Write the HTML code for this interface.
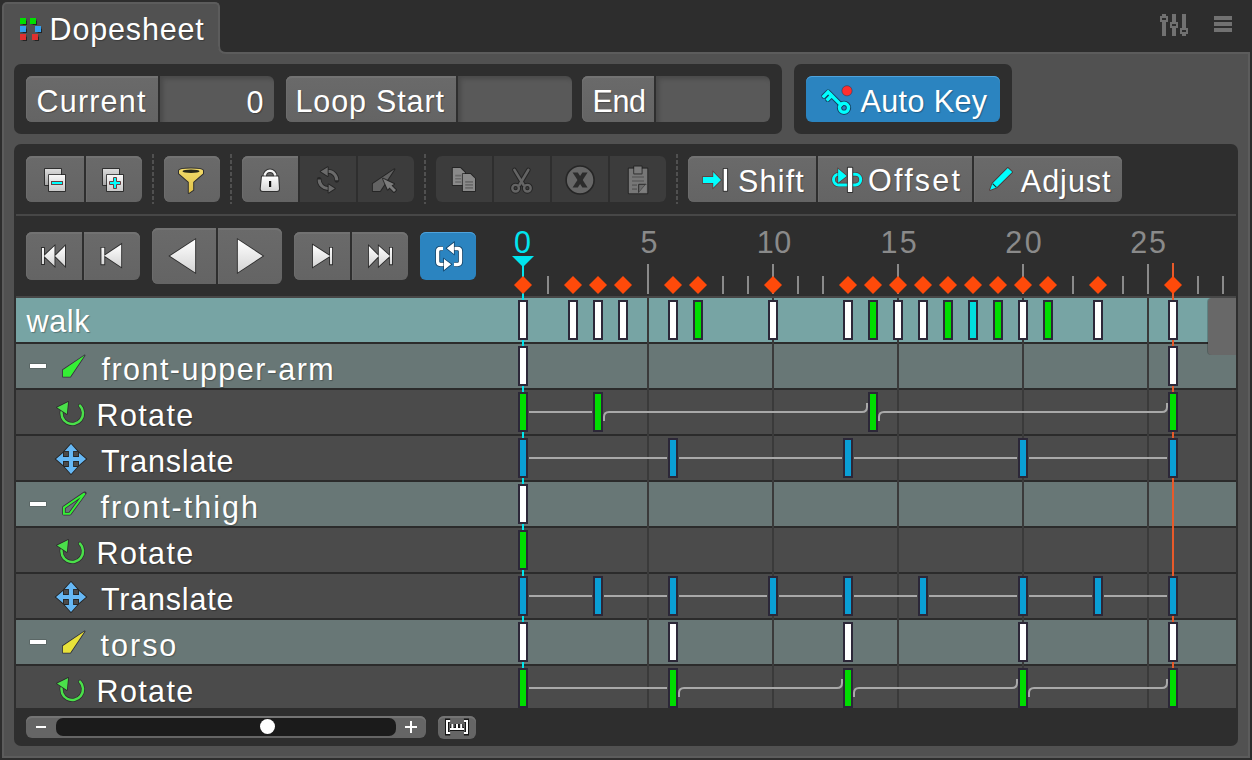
<!DOCTYPE html><html><head><meta charset="utf-8"><style>
*{margin:0;padding:0;box-sizing:border-box}
html,body{width:1252px;height:760px;overflow:hidden;background:#2d2d2d;font-family:"Liberation Sans",sans-serif;color:#fff}
.abs{position:absolute}
.t{position:absolute;white-space:nowrap;font-size:30.5px;line-height:1;color:#fff;text-shadow:1px 1px 1px rgba(0,0,0,.28)}
.dark{position:absolute;background:#2e2e2e;border-radius:7px}
.btn{position:absolute;background:linear-gradient(#6a6a6a,#646464);box-shadow:inset 0 2px 0 #727272,inset 1px 0 0 #6c6c6c}
.ina{position:absolute;background:#3c3c3c}
.fld{position:absolute;background:#595959;box-shadow:inset 3px 3px 4px rgba(0,0,0,.18)}
.sep{position:absolute;width:2px;background:repeating-linear-gradient(#505050 0 4px,transparent 4px 6px)}
</style></head><body>
<div class="abs" style="left:2px;top:52px;width:1248px;height:706px;background:#515151;border:2px solid #5c5c5c"></div>
<div class="abs" style="left:2px;top:2px;width:218px;height:54px;background:#515151;border:2px solid #5c5c5c;border-bottom:none;border-radius:5px 5px 0 0"></div>
<svg class="abs" style="left:210px;top:36px" width="30" height="24" viewBox="210 36 30 24"><rect x="210" y="36" width="30" height="24" fill="#515151"/><path d="M218 36 H240 V52 H225 Q218 52 218 45Z" fill="#2d2d2d"/><path d="M219 36 V46 Q219 53 226 53 H240" fill="none" stroke="#5c5c5c" stroke-width="2"/><rect x="210" y="56" width="30" height="4" fill="#515151"/></svg>
<div class="abs" style="left:20px;top:18px;width:6px;height:6px;background:#00e000;box-shadow:0.5px 0.5px 1px rgba(0,0,0,.55)"></div>
<div class="abs" style="left:30px;top:18px;width:6px;height:6px;background:#00e000;box-shadow:0.5px 0.5px 1px rgba(0,0,0,.55)"></div>
<div class="abs" style="left:20px;top:26px;width:6px;height:6px;background:#33a0f0;box-shadow:0.5px 0.5px 1px rgba(0,0,0,.55)"></div>
<div class="abs" style="left:35px;top:26px;width:6px;height:6px;background:#33a0f0;box-shadow:0.5px 0.5px 1px rgba(0,0,0,.55)"></div>
<div class="abs" style="left:20px;top:34px;width:6px;height:6px;background:#e03030;box-shadow:0.5px 0.5px 1px rgba(0,0,0,.55)"></div>
<div class="abs" style="left:32px;top:34px;width:6px;height:6px;background:#e03030;box-shadow:0.5px 0.5px 1px rgba(0,0,0,.55)"></div>
<svg class="abs" style="left:1150px;top:5px" width="100" height="40" viewBox="0 0 100 40" fill="#717171"><rect x="12" y="9" width="4" height="22"/><rect x="10" y="11" width="8" height="6"/><rect x="12" y="13" width="4" height="2" fill="#2d2d2d"/><rect x="22" y="9" width="4" height="22"/><rect x="20" y="17" width="8" height="6"/><rect x="22" y="19" width="4" height="2" fill="#2d2d2d"/><rect x="32" y="9" width="4" height="22"/><rect x="30" y="23" width="8" height="6"/><rect x="32" y="25" width="4" height="2" fill="#2d2d2d"/><rect x="64" y="11" width="18" height="4"/><rect x="64" y="17" width="18" height="4"/><rect x="64" y="23" width="18" height="4"/></svg>
<div class="dark" style="left:14px;top:64px;width:768px;height:70px"></div>
<div class="dark" style="left:794px;top:64px;width:218px;height:70px"></div>
<div class="btn" style="left:26px;top:76px;width:132px;height:46px;border-radius:6px 0 0 6px"></div>
<div class="fld" style="left:160px;top:76px;width:114px;height:46px;border-radius:0 6px 6px 0"></div>
<div class="btn" style="left:286px;top:76px;width:170px;height:46px;border-radius:6px 0 0 6px"></div>
<div class="fld" style="left:458px;top:76px;width:114px;height:46px;border-radius:0 6px 6px 0"></div>
<div class="btn" style="left:582px;top:76px;width:72px;height:46px;border-radius:6px 0 0 6px"></div>
<div class="fld" style="left:656px;top:76px;width:114px;height:46px;border-radius:0 6px 6px 0"></div>
<div class="abs" style="left:806px;top:76px;width:194px;height:46px;border-radius:6px;background:#2b84c0;box-shadow:inset 0 1px 0 #4fa3dc"></div>
<div class="dark" style="left:14px;top:144px;width:1224px;height:602px"></div>
<div class="btn" style="left:26px;top:156px;width:58px;height:46px;border-radius:6px 0 0 6px"></div>
<div class="btn" style="left:86px;top:156px;width:56px;height:46px;border-radius:0 6px 6px 0"></div>
<div class="sep" style="left:152px;top:154px;height:50px"></div>
<div class="btn" style="left:164px;top:156px;width:56px;height:46px;border-radius:6px"></div>
<div class="sep" style="left:230px;top:154px;height:50px"></div>
<div class="btn" style="left:242px;top:156px;width:56px;height:46px;border-radius:6px 0 0 6px"></div>
<div class="ina" style="left:300px;top:156px;width:56px;height:46px;border-radius:0"></div>
<div class="ina" style="left:358px;top:156px;width:56px;height:46px;border-radius:0 6px 6px 0"></div>
<div class="sep" style="left:424px;top:154px;height:50px"></div>
<div class="ina" style="left:436px;top:156px;width:56px;height:46px;border-radius:6px 0 0 6px"></div>
<div class="ina" style="left:494px;top:156px;width:56px;height:46px;border-radius:0"></div>
<div class="ina" style="left:552px;top:156px;width:56px;height:46px;border-radius:0"></div>
<div class="ina" style="left:610px;top:156px;width:56px;height:46px;border-radius:0 6px 6px 0"></div>
<div class="sep" style="left:676px;top:154px;height:50px"></div>
<div class="btn" style="left:688px;top:156px;width:128px;height:46px;border-radius:6px 0 0 6px"></div>
<div class="btn" style="left:818px;top:156px;width:154px;height:46px;border-radius:0"></div>
<div class="btn" style="left:974px;top:156px;width:148px;height:46px;border-radius:0 6px 6px 0"></div>
<div class="abs" style="left:16px;top:214px;width:1220px;height:2px;background:#474747"></div>
<div class="btn" style="left:26px;top:232px;width:56px;height:48px;border-radius:6px 0 0 6px"></div>
<div class="btn" style="left:84px;top:232px;width:56px;height:48px;border-radius:0 6px 6px 0"></div>
<div class="btn" style="left:152px;top:228px;width:64px;height:56px;border-radius:6px 0 0 6px"></div>
<div class="btn" style="left:218px;top:228px;width:64px;height:56px;border-radius:0 6px 6px 0"></div>
<div class="btn" style="left:294px;top:232px;width:56px;height:48px;border-radius:6px 0 0 6px"></div>
<div class="btn" style="left:352px;top:232px;width:56px;height:48px;border-radius:0 6px 6px 0"></div>
<div class="abs" style="left:420px;top:232px;width:56px;height:48px;border-radius:6px;background:#2b84c0;box-shadow:inset 0 1px 0 #4fa3dc"></div>
<div class="abs" style="left:16px;top:296px;width:1220px;height:2px;background:#474747"></div>
<div class="abs" style="left:16px;top:298px;width:1220px;height:410px;background:#2b2b2b"></div>
<div class="abs" style="left:16px;top:298px;width:1220px;height:44px;background:#77a4a4"></div>
<div class="abs" style="left:16px;top:344px;width:1220px;height:44px;background:#687776"></div>
<div class="abs" style="left:16px;top:390px;width:1220px;height:44px;background:#4b4b4b"></div>
<div class="abs" style="left:16px;top:436px;width:1220px;height:44px;background:#4b4b4b"></div>
<div class="abs" style="left:16px;top:482px;width:1220px;height:44px;background:#687776"></div>
<div class="abs" style="left:16px;top:528px;width:1220px;height:44px;background:#4b4b4b"></div>
<div class="abs" style="left:16px;top:574px;width:1220px;height:44px;background:#4b4b4b"></div>
<div class="abs" style="left:16px;top:620px;width:1220px;height:44px;background:#687776"></div>
<div class="abs" style="left:16px;top:666px;width:1220px;height:42px;background:#4b4b4b"></div>
<svg class="abs" style="left:0;top:0" width="1252" height="760" viewBox="0 0 1252 760"><rect x="647" y="298" width="2" height="410" fill="#3a3a3a"/><rect x="772" y="298" width="2" height="410" fill="#3a3a3a"/><rect x="897" y="298" width="2" height="410" fill="#3a3a3a"/><rect x="1022" y="298" width="2" height="410" fill="#3a3a3a"/><rect x="1147" y="298" width="2" height="410" fill="#3a3a3a"/><rect x="547" y="276" width="2" height="18" fill="#8a8a8a"/><rect x="647" y="264" width="2" height="30" fill="#8a8a8a"/><rect x="722" y="276" width="2" height="18" fill="#8a8a8a"/><rect x="747" y="276" width="2" height="18" fill="#8a8a8a"/><rect x="772" y="264" width="2" height="30" fill="#8a8a8a"/><rect x="797" y="276" width="2" height="18" fill="#8a8a8a"/><rect x="822" y="276" width="2" height="18" fill="#8a8a8a"/><rect x="897" y="264" width="2" height="30" fill="#8a8a8a"/><rect x="1022" y="264" width="2" height="30" fill="#8a8a8a"/><rect x="1072" y="276" width="2" height="18" fill="#8a8a8a"/><rect x="1122" y="276" width="2" height="18" fill="#8a8a8a"/><rect x="1147" y="264" width="2" height="30" fill="#8a8a8a"/><rect x="1197" y="276" width="2" height="18" fill="#8a8a8a"/><rect x="1222" y="276" width="2" height="18" fill="#8a8a8a"/><g font-family="Liberation Sans" font-size="30.5" fill="#8a8a8a"><text x="640.5" y="253">5</text><text x="756.7" y="253">1</text><text x="774.2" y="253">0</text><text x="880.4" y="253">1</text><text x="899.8" y="253">5</text><text x="1005.2" y="253">2</text><text x="1024.8" y="253">0</text><text x="1130.2" y="253">2</text><text x="1149.1" y="253">5</text></g><text x="513.9" y="253" font-family="Liberation Sans" font-size="30.5" fill="#00e5ee">0</text><rect x="1172" y="263" width="2" height="445" fill="#e85a2a"/><rect x="522" y="262" width="2" height="446" fill="#00e5ee"/><path d="M512 256 H534 L523 267 Z" fill="#00e5ee"/><path d="M523 276 L532 285 L523 294 L514 285 Z" fill="#ff4a0a"/><path d="M573 276 L582 285 L573 294 L564 285 Z" fill="#ff4a0a"/><path d="M598 276 L607 285 L598 294 L589 285 Z" fill="#ff4a0a"/><path d="M623 276 L632 285 L623 294 L614 285 Z" fill="#ff4a0a"/><path d="M673 276 L682 285 L673 294 L664 285 Z" fill="#ff4a0a"/><path d="M698 276 L707 285 L698 294 L689 285 Z" fill="#ff4a0a"/><path d="M773 276 L782 285 L773 294 L764 285 Z" fill="#ff4a0a"/><path d="M848 276 L857 285 L848 294 L839 285 Z" fill="#ff4a0a"/><path d="M873 276 L882 285 L873 294 L864 285 Z" fill="#ff4a0a"/><path d="M898 276 L907 285 L898 294 L889 285 Z" fill="#ff4a0a"/><path d="M923 276 L932 285 L923 294 L914 285 Z" fill="#ff4a0a"/><path d="M948 276 L957 285 L948 294 L939 285 Z" fill="#ff4a0a"/><path d="M973 276 L982 285 L973 294 L964 285 Z" fill="#ff4a0a"/><path d="M998 276 L1007 285 L998 294 L989 285 Z" fill="#ff4a0a"/><path d="M1023 276 L1032 285 L1023 294 L1014 285 Z" fill="#ff4a0a"/><path d="M1048 276 L1057 285 L1048 294 L1039 285 Z" fill="#ff4a0a"/><path d="M1098 276 L1107 285 L1098 294 L1089 285 Z" fill="#ff4a0a"/><path d="M1173 276 L1182 285 L1173 294 L1164 285 Z" fill="#ff4a0a"/><path d="M529 412 H592" stroke="#a9a9a9" stroke-width="2" fill="none"/><path d="M604 421 V417 Q604 412 609 412 H862 Q867 412 867 407 V403" stroke="#a9a9a9" stroke-width="2" fill="none"/><path d="M879 421 V417 Q879 412 884 412 H1162 Q1167 412 1167 407 V403" stroke="#a9a9a9" stroke-width="2" fill="none"/><path d="M529 458 H667" stroke="#a9a9a9" stroke-width="2" fill="none"/><path d="M679 458 H842" stroke="#a9a9a9" stroke-width="2" fill="none"/><path d="M854 458 H1017" stroke="#a9a9a9" stroke-width="2" fill="none"/><path d="M1029 458 H1167" stroke="#a9a9a9" stroke-width="2" fill="none"/><path d="M529 596 H592" stroke="#a9a9a9" stroke-width="2" fill="none"/><path d="M604 596 H667" stroke="#a9a9a9" stroke-width="2" fill="none"/><path d="M679 596 H767" stroke="#a9a9a9" stroke-width="2" fill="none"/><path d="M779 596 H842" stroke="#a9a9a9" stroke-width="2" fill="none"/><path d="M854 596 H917" stroke="#a9a9a9" stroke-width="2" fill="none"/><path d="M929 596 H1017" stroke="#a9a9a9" stroke-width="2" fill="none"/><path d="M1029 596 H1092" stroke="#a9a9a9" stroke-width="2" fill="none"/><path d="M1104 596 H1167" stroke="#a9a9a9" stroke-width="2" fill="none"/><path d="M529 688 H667" stroke="#a9a9a9" stroke-width="2" fill="none"/><path d="M679 697 V693 Q679 688 684 688 H837 Q842 688 842 683 V679" stroke="#a9a9a9" stroke-width="2" fill="none"/><path d="M854 697 V693 Q854 688 859 688 H1012 Q1017 688 1017 683 V679" stroke="#a9a9a9" stroke-width="2" fill="none"/><path d="M1029 697 V693 Q1029 688 1034 688 H1162 Q1167 688 1167 683 V679" stroke="#a9a9a9" stroke-width="2" fill="none"/><rect x="519" y="301" width="8" height="38" fill="#ffffff" stroke="#2c2738" stroke-width="2"/><rect x="569" y="301" width="8" height="38" fill="#ffffff" stroke="#2c2738" stroke-width="2"/><rect x="594" y="301" width="8" height="38" fill="#ffffff" stroke="#2c2738" stroke-width="2"/><rect x="619" y="301" width="8" height="38" fill="#ffffff" stroke="#2c2738" stroke-width="2"/><rect x="669" y="301" width="8" height="38" fill="#ffffff" stroke="#2c2738" stroke-width="2"/><rect x="694" y="301" width="8" height="38" fill="#00dd00" stroke="#2c2738" stroke-width="2"/><rect x="769" y="301" width="8" height="38" fill="#ffffff" stroke="#2c2738" stroke-width="2"/><rect x="844" y="301" width="8" height="38" fill="#ffffff" stroke="#2c2738" stroke-width="2"/><rect x="869" y="301" width="8" height="38" fill="#00dd00" stroke="#2c2738" stroke-width="2"/><rect x="894" y="301" width="8" height="38" fill="#ffffff" stroke="#2c2738" stroke-width="2"/><rect x="919" y="301" width="8" height="38" fill="#ffffff" stroke="#2c2738" stroke-width="2"/><rect x="944" y="301" width="8" height="38" fill="#00dd00" stroke="#2c2738" stroke-width="2"/><rect x="969" y="301" width="8" height="38" fill="#00dede" stroke="#2c2738" stroke-width="2"/><rect x="994" y="301" width="8" height="38" fill="#00dd00" stroke="#2c2738" stroke-width="2"/><rect x="1019" y="301" width="8" height="38" fill="#ffffff" stroke="#2c2738" stroke-width="2"/><rect x="1044" y="301" width="8" height="38" fill="#00dd00" stroke="#2c2738" stroke-width="2"/><rect x="1094" y="301" width="8" height="38" fill="#ffffff" stroke="#2c2738" stroke-width="2"/><rect x="1169" y="301" width="8" height="38" fill="#ffffff" stroke="#2c2738" stroke-width="2"/><rect x="519" y="347" width="8" height="38" fill="#ffffff" stroke="#2c2738" stroke-width="2"/><rect x="1169" y="347" width="8" height="38" fill="#ffffff" stroke="#2c2738" stroke-width="2"/><rect x="519" y="393" width="8" height="38" fill="#00dd00" stroke="#2c2738" stroke-width="2"/><rect x="594" y="393" width="8" height="38" fill="#00dd00" stroke="#2c2738" stroke-width="2"/><rect x="869" y="393" width="8" height="38" fill="#00dd00" stroke="#2c2738" stroke-width="2"/><rect x="1169" y="393" width="8" height="38" fill="#00dd00" stroke="#2c2738" stroke-width="2"/><rect x="519" y="439" width="8" height="38" fill="#0a9fd6" stroke="#2c2738" stroke-width="2"/><rect x="669" y="439" width="8" height="38" fill="#0a9fd6" stroke="#2c2738" stroke-width="2"/><rect x="844" y="439" width="8" height="38" fill="#0a9fd6" stroke="#2c2738" stroke-width="2"/><rect x="1019" y="439" width="8" height="38" fill="#0a9fd6" stroke="#2c2738" stroke-width="2"/><rect x="1169" y="439" width="8" height="38" fill="#0a9fd6" stroke="#2c2738" stroke-width="2"/><rect x="519" y="485" width="8" height="38" fill="#ffffff" stroke="#2c2738" stroke-width="2"/><rect x="519" y="531" width="8" height="38" fill="#00dd00" stroke="#2c2738" stroke-width="2"/><rect x="519" y="577" width="8" height="38" fill="#0a9fd6" stroke="#2c2738" stroke-width="2"/><rect x="594" y="577" width="8" height="38" fill="#0a9fd6" stroke="#2c2738" stroke-width="2"/><rect x="669" y="577" width="8" height="38" fill="#0a9fd6" stroke="#2c2738" stroke-width="2"/><rect x="769" y="577" width="8" height="38" fill="#0a9fd6" stroke="#2c2738" stroke-width="2"/><rect x="844" y="577" width="8" height="38" fill="#0a9fd6" stroke="#2c2738" stroke-width="2"/><rect x="919" y="577" width="8" height="38" fill="#0a9fd6" stroke="#2c2738" stroke-width="2"/><rect x="1019" y="577" width="8" height="38" fill="#0a9fd6" stroke="#2c2738" stroke-width="2"/><rect x="1094" y="577" width="8" height="38" fill="#0a9fd6" stroke="#2c2738" stroke-width="2"/><rect x="1169" y="577" width="8" height="38" fill="#0a9fd6" stroke="#2c2738" stroke-width="2"/><rect x="519" y="623" width="8" height="38" fill="#ffffff" stroke="#2c2738" stroke-width="2"/><rect x="669" y="623" width="8" height="38" fill="#ffffff" stroke="#2c2738" stroke-width="2"/><rect x="844" y="623" width="8" height="38" fill="#ffffff" stroke="#2c2738" stroke-width="2"/><rect x="1019" y="623" width="8" height="38" fill="#ffffff" stroke="#2c2738" stroke-width="2"/><rect x="1169" y="623" width="8" height="38" fill="#ffffff" stroke="#2c2738" stroke-width="2"/><rect x="519" y="669" width="8" height="38" fill="#00dd00" stroke="#2c2738" stroke-width="2"/><rect x="669" y="669" width="8" height="38" fill="#00dd00" stroke="#2c2738" stroke-width="2"/><rect x="844" y="669" width="8" height="38" fill="#00dd00" stroke="#2c2738" stroke-width="2"/><rect x="1019" y="669" width="8" height="38" fill="#00dd00" stroke="#2c2738" stroke-width="2"/><rect x="1169" y="669" width="8" height="38" fill="#00dd00" stroke="#2c2738" stroke-width="2"/></svg>
<div class="abs" style="left:1208px;top:298px;width:28px;height:57px;background:#686868;border-radius:4px 0 0 4px;box-shadow:-1px 0 0 rgba(0,0,0,.2)"></div>
<div class="abs" style="left:26px;top:716px;width:400px;height:22px;border-radius:6px;background:#656565;box-shadow:inset 0 2px 0 #747474"></div>
<div class="abs" style="left:56px;top:718px;width:340px;height:18px;border-radius:7px;background:#1b1b1b"></div>
<div class="abs" style="left:260px;top:719px;width:15px;height:15px;border-radius:50%;background:#fff"></div>
<div class="abs" style="left:36px;top:726px;width:10px;height:2px;background:#fff"></div>
<div class="abs" style="left:405px;top:726px;width:12px;height:2px;background:#fff"></div><div class="abs" style="left:410px;top:721px;width:2px;height:12px;background:#fff"></div>
<div class="abs" style="left:438px;top:716px;width:38px;height:23px;border-radius:6px;background:#656565;box-shadow:inset 0 2px 0 #747474"></div>
<div class="t" style="left:49.5px;top:14.08px;letter-spacing:0.85px;color:#fff;font-size:30.5px">Dopesheet</div>
<div class="t" style="left:36.5px;top:86.28px;letter-spacing:1.2px;color:#fff;font-size:30.5px">Current</div>
<div class="t" style="left:246.5px;top:86.58px;letter-spacing:0px;color:#fff;font-size:30.5px">0</div>
<div class="t" style="left:295.5px;top:85.78px;letter-spacing:0.85px;color:#fff;font-size:30.5px">Loop Start</div>
<div class="t" style="left:592.5px;top:86.48px;letter-spacing:-0.35px;color:#fff;font-size:30.5px">End</div>
<div class="t" style="left:860.5px;top:86.18px;letter-spacing:0.4px;color:#fff;font-size:30.5px">Auto Key</div>
<div class="t" style="left:738px;top:165.98px;letter-spacing:1.2px;color:#fff;font-size:30.5px">Shift</div>
<div class="t" style="left:868px;top:165.48px;letter-spacing:2.25px;color:#fff;font-size:30.5px">Offset</div>
<div class="t" style="left:1020.8px;top:165.98px;letter-spacing:1.0px;color:#fff;font-size:30.5px">Adjust</div>
<div class="t" style="left:26.6px;top:306.18px;letter-spacing:0.63px;color:#fff;font-size:30.5px">walk</div>
<div class="t" style="left:101.6px;top:353.68px;letter-spacing:1.45px;color:#fff;font-size:30.5px">front-upper-arm</div>
<div class="t" style="left:96.5px;top:400.08px;letter-spacing:1.38px;color:#fff;font-size:30.5px">Rotate</div>
<div class="t" style="left:101px;top:445.98px;letter-spacing:0.8px;color:#fff;font-size:30.5px">Translate</div>
<div class="t" style="left:100.6px;top:491.68px;letter-spacing:2.0px;color:#fff;font-size:30.5px">front-thigh</div>
<div class="t" style="left:96.5px;top:538.08px;letter-spacing:1.38px;color:#fff;font-size:30.5px">Rotate</div>
<div class="t" style="left:101px;top:583.98px;letter-spacing:0.8px;color:#fff;font-size:30.5px">Translate</div>
<div class="t" style="left:100.6px;top:629.68px;letter-spacing:1.98px;color:#fff;font-size:30.5px">torso</div>
<div class="t" style="left:96.5px;top:676.08px;letter-spacing:1.38px;color:#fff;font-size:30.5px">Rotate</div>
<svg class="abs" style="left:0;top:0" width="1252" height="760" viewBox="0 0 1252 760"><defs>
<linearGradient id="gw" x1="0" y1="0" x2="0" y2="1"><stop offset="0" stop-color="#ffffff"/><stop offset="1" stop-color="#d4d4d4"/></linearGradient>
<linearGradient id="gb" x1="0" y1="0" x2="0" y2="1"><stop offset="0" stop-color="#dcdcdc"/><stop offset="1" stop-color="#a8a8a8"/></linearGradient>
<linearGradient id="gf" x1="0" y1="0" x2="0" y2="1"><stop offset="0" stop-color="#f8f8f8"/><stop offset="1" stop-color="#c8c8c8"/></linearGradient>
<linearGradient id="gy" x1="0" y1="0" x2="0" y2="1"><stop offset="0" stop-color="#f4dc6a"/><stop offset="1" stop-color="#e0c24a"/></linearGradient>
</defs><rect x="45" y="169" width="16" height="16" fill="url(#gb)" stroke="#1e1e1e" stroke-opacity=".75" stroke-width="2" paint-order="stroke" stroke-linejoin="round"/><rect x="49" y="175" width="16" height="16" fill="url(#gf)" stroke="#1e1e1e" stroke-opacity=".75" stroke-width="2" paint-order="stroke" stroke-linejoin="round"/><rect x="103" y="169" width="16" height="16" fill="url(#gb)" stroke="#1e1e1e" stroke-opacity=".75" stroke-width="2" paint-order="stroke" stroke-linejoin="round"/><rect x="107" y="175" width="16" height="16" fill="url(#gf)" stroke="#1e1e1e" stroke-opacity=".75" stroke-width="2" paint-order="stroke" stroke-linejoin="round"/><rect x="51.5" y="181.5" width="11" height="3" fill="#00ffff" stroke="#6a4040" stroke-width="1"/><path d="M109.5 181.5H113.5V177.5H116.5V181.5H120.5V184.5H116.5V188.5H113.5V184.5H109.5Z" fill="#00ffff" stroke="#6a4040" stroke-width="1"/><path d="M179 170.5 Q179 168.5 191 168.5 Q203 168.5 203 170.5 V173.5 L193.2 182 V190 L188.8 193 V182 L179 173.5Z" fill="url(#gy)" stroke="#1e1e1e" stroke-opacity=".75" stroke-width="2" paint-order="stroke" stroke-linejoin="round"/><ellipse cx="191" cy="171.3" rx="8.5" ry="1.7" fill="#2a2a1a"/><path d="M264.8 177.5 V176 A5.2 5.2 0 0 1 275.2 176 V177.5" fill="none" stroke="#1e1e1e" stroke-opacity=".7" stroke-width="4.5"/><path d="M264.8 177.5 V176 A5.2 5.2 0 0 1 275.2 176 V177.5" fill="none" stroke="#f4f4f4" stroke-width="2.5"/><path d="M262 176.6 H278.2 L279 189 Q279 191 277 191 H262.7 Q260.7 191 260.7 189Z" fill="url(#gw)" stroke="#1e1e1e" stroke-opacity=".75" stroke-width="2" paint-order="stroke" stroke-linejoin="round"/><rect x="269" y="181" width="2.2" height="6" fill="#111"/><path d="M328 171.3 A8.8 8.8 0 0 1 336.8 180.3" fill="none" stroke="#262626" stroke-width="4.8" stroke-linecap="round"/><path d="M319.2 179.5 A8.8 8.8 0 0 0 328.5 188.5" fill="none" stroke="#262626" stroke-width="4.8" stroke-linecap="round"/><path d="M328 171.3 A8.8 8.8 0 0 1 336.8 180.3" fill="none" stroke="#6b6b6b" stroke-width="3" stroke-linecap="butt"/><path d="M319.2 179.5 A8.8 8.8 0 0 0 328.5 188.5" fill="none" stroke="#6b6b6b" stroke-width="3" stroke-linecap="butt"/><path d="M320.7 171.5 L327.7 167.3 V176Z M334.8 188.5 L328.6 184.5 V192.5Z" fill="#6b6b6b" stroke="#1e1e1e" stroke-opacity=".75" stroke-width="2" paint-order="stroke" stroke-linejoin="round"/><path d="M394.4 169.3 L372.9 183.8 V191 H380.1 Z" fill="#636363" stroke="#1e1e1e" stroke-opacity=".75" stroke-width="2" paint-order="stroke" stroke-linejoin="round"/><path d="M383 178.7 L394 184 L391.5 185.6 L396 190 L394 192 L389.5 187.6 L387.7 189.6Z" fill="#7c7c7c" stroke="#1e1e1e" stroke-opacity=".75" stroke-width="2" paint-order="stroke" stroke-linejoin="round"/><path d="M452.8 167.9 H460.3 L464.90000000000003 172.5 V185.0 H452.8Z" fill="#8a8a8a" stroke="#1e1e1e" stroke-opacity=".75" stroke-width="2" paint-order="stroke" stroke-linejoin="round"/><path d="M462.9 174 H470.4 L475.0 178.6 V191.1 H462.9Z" fill="#8a8a8a" stroke="#1e1e1e" stroke-opacity=".75" stroke-width="2" paint-order="stroke" stroke-linejoin="round"/><path d="M455.2 175.6h6M455.2 178.8h6M455.2 182h6M465.2 181.9h7.8M465.2 184.9h7.8M465.2 187.9h7.8" stroke="#6a6a6a" stroke-width="1.6"/><path d="M514.4 169.9 L523.6 185 M528.4 169.9 L519.4 185" stroke="#222" stroke-opacity=".9" stroke-width="4.6" stroke-linecap="round"/><circle cx="515.6" cy="188.2" r="3.3" fill="none" stroke="#222" stroke-opacity=".9" stroke-width="4.4"/><circle cx="527.4" cy="188.2" r="3.3" fill="none" stroke="#222" stroke-opacity=".9" stroke-width="4.4"/><path d="M514.4 169.9 L523.6 185 M528.4 169.9 L519.4 185" stroke="#646464" stroke-width="2.6" stroke-linecap="round"/><circle cx="515.6" cy="188.2" r="3.3" fill="none" stroke="#646464" stroke-width="2.4"/><circle cx="527.4" cy="188.2" r="3.3" fill="none" stroke="#646464" stroke-width="2.4"/><circle cx="580.1" cy="180" r="14" fill="#676767" stroke="#262626" stroke-width="1.6"/><path d="M572.6 172.4 H577.8 L587.6 187.6 H582.4Z" fill="#2c2c2c"/><path d="M587.6 172.4 H582.4 L572.6 187.6 H577.8Z" fill="#2c2c2c"/><rect x="628.8" y="168.6" width="18.5" height="24.7" fill="#777" stroke="#1e1e1e" stroke-opacity=".75" stroke-width="2" paint-order="stroke" stroke-linejoin="round"/><rect x="634.2" y="166.5" width="7.4" height="6.9" fill="#7a7a7a" stroke="#1e1e1e" stroke-opacity=".75" stroke-width="2" paint-order="stroke" stroke-linejoin="round"/><path d="M632 177h12M632 181h12M632 185.1h5M632 189.1h5" stroke="#5e5e5e" stroke-width="1.7"/><path d="M638.7 184.3 H646 L638.7 192.5Z" fill="#6a6a6a" stroke="#2a2a2a" stroke-width="1"/><path d="M646 184.3 V192.5 H638.7Z" fill="#7e7e7e"/><path d="M702.9 177 H713.2 V172 L721 179.9 L713.2 187.7 V183 H702.9Z" fill="#00ffff" stroke="#5a2a2a" stroke-opacity=".8" stroke-width="1.4" paint-order="stroke"/><rect x="723.7" y="168.9" width="3.4" height="21.9" fill="#fff" stroke="#1e1e1e" stroke-opacity=".75" stroke-width="2" paint-order="stroke" stroke-linejoin="round"/><path d="M838.8 174.3 A5.3 5.3 0 0 0 838.8 184.9 H855.4 A5.3 5.3 0 0 0 855.4 174.3 H853" fill="none" stroke="#4a2020" stroke-opacity=".6" stroke-width="4.4"/><path d="M838.8 174.3 A5.3 5.3 0 0 0 838.8 184.9 H855.4 A5.3 5.3 0 0 0 855.4 174.3 H853" fill="none" stroke="#00ffff" stroke-width="3"/><path d="M838.1 168.7 L846.8 175.9 L838.1 182.8Z" fill="#00ffff" stroke="#4a2020" stroke-opacity=".6" stroke-width="1.4" paint-order="stroke"/><rect x="847.9" y="167.8" width="4.3" height="24.2" fill="#fff" stroke="#1e1e1e" stroke-opacity=".75" stroke-width="2" paint-order="stroke" stroke-linejoin="round"/><path d="M1007.8 167.9 L1012.2 172.1 L996.5 187.6 L990 190 L992.4 183.4Z" fill="#00ffff" stroke="#4a2020" stroke-opacity=".7" stroke-width="1.6" paint-order="stroke" stroke-linejoin="round"/><path d="M992.6 183.6 L996.4 187.4" stroke="#222" stroke-width="1.1"/><g fill="none" stroke="#10304a" stroke-opacity=".8" stroke-width="5.3" stroke-linecap="round"><path d="M828.1 92 L841 104.9 M828.1 92 L823.9 96.2 M831.6 95.5 L827.8 99.3"/><circle cx="844" cy="107.8" r="4.5"/></g><g fill="none" stroke="#00ffff" stroke-width="3.4" stroke-linecap="square"><path d="M828.1 92 L841 104.9 M828.1 92 L823.9 96.2 M831.6 95.5 L827.8 99.3"/><circle cx="844" cy="107.8" r="4.5"/></g><circle cx="847" cy="90.8" r="5.1" fill="#ff2e2e" stroke="#1a3a55" stroke-opacity=".5" stroke-width="1"/><path d="M41.9 248 H44 V264 H41.9Z M44 256 L54.5 246.1 V265.9Z M55 256 L65 246.1 V265.9Z" fill="#1e1e1e" fill-opacity=".8" stroke="#1e1e1e" stroke-opacity=".8" stroke-width="1.8" stroke-linejoin="miter"/><path d="M101.4 247.8 H104.3 V264.3 H101.4Z M104.3 255.7 L121.2 244.5 V266.9Z" fill="#1e1e1e" fill-opacity=".8" stroke="#1e1e1e" stroke-opacity=".8" stroke-width="1.8" stroke-linejoin="miter"/><path d="M170 256 L195.2 239.6 V272.4Z" fill="#1e1e1e" fill-opacity=".8" stroke="#1e1e1e" stroke-opacity=".8" stroke-width="1.8" stroke-linejoin="miter"/><path d="M262.7 256 L237.8 239.6 V272.4Z" fill="#1e1e1e" fill-opacity=".8" stroke="#1e1e1e" stroke-opacity=".8" stroke-width="1.8" stroke-linejoin="miter"/><path d="M312.9 245.1 L330 256 L312.9 266.9Z M330 247.8 H332.1 V264.3 H330Z" fill="#1e1e1e" fill-opacity=".8" stroke="#1e1e1e" stroke-opacity=".8" stroke-width="1.8" stroke-linejoin="miter"/><path d="M368.9 246.1 L378.8 256 L368.9 266.2Z M378.8 246.1 L389.9 256 L378.8 266.2Z M389.9 247.8 H392 V264.3 H389.9Z" fill="#1e1e1e" fill-opacity=".8" stroke="#1e1e1e" stroke-opacity=".8" stroke-width="1.8" stroke-linejoin="miter"/><path d="M41.9 248 H44 V264 H41.9Z M44 256 L54.5 246.1 V265.9Z M55 256 L65 246.1 V265.9Z" fill="url(#gw)"/><path d="M101.4 247.8 H104.3 V264.3 H101.4Z M104.3 255.7 L121.2 244.5 V266.9Z" fill="url(#gw)"/><path d="M170 256 L195.2 239.6 V272.4Z" fill="url(#gw)"/><path d="M262.7 256 L237.8 239.6 V272.4Z" fill="url(#gw)"/><path d="M312.9 245.1 L330 256 L312.9 266.9Z M330 247.8 H332.1 V264.3 H330Z" fill="url(#gw)"/><path d="M368.9 246.1 L378.8 256 L368.9 266.2Z M378.8 246.1 L389.9 256 L378.8 266.2Z M389.9 247.8 H392 V264.3 H389.9Z" fill="url(#gw)"/><path d="M443 248.5 H440.5 Q437.6 248.5 437.6 251.4 V261.6 Q437.6 264.5 440.5 264.5 H445 M454 264.5 H457.6 Q460.5 264.5 460.5 261.6 V251.4 Q460.5 248.5 457.6 248.5 H453" fill="none" stroke="#0a2a45" stroke-opacity=".7" stroke-width="5"/><path d="M443 248.5 H440.5 Q437.6 248.5 437.6 251.4 V261.6 Q437.6 264.5 440.5 264.5 H445 M454 264.5 H457.6 Q460.5 264.5 460.5 261.6 V251.4 Q460.5 248.5 457.6 248.5 H453" fill="none" stroke="#fff" stroke-width="3.3"/><path d="M444 259.1 L451.1 264.3 L444 270Z M446.8 248.2 L453.9 242.7 V253.9Z" fill="#fff" stroke="#0a2a45" stroke-opacity=".7" stroke-width="1.6" paint-order="stroke"/><path d="M450.2 720.4 H447 V733.4 H450.2 M463.9 720.4 H467 V733.4 H463.9 M450 729 H464 M452.4 729 V724 M457 729 V724 M461.2 729 V724" fill="none" stroke="#151515" stroke-width="4"/><path d="M450.2 720.9 H447 V732.9 H450.2 M463.9 720.9 H467 V732.9 H463.9 M450 729 H464 M452.4 729 V724 M457 729 V724 M461.2 729 V724" fill="none" stroke="#fff" stroke-width="2"/><rect x="30" y="364" width="16" height="4" fill="#fff" stroke="#2a2a2a" stroke-opacity=".4" stroke-width="1" paint-order="stroke"/><path d="M84.7 355.3 L62.9 370 V376.8 H70.3Z" fill="#35f035" stroke="#3a2a40" stroke-width="1.6" paint-order="stroke" stroke-linejoin="round"/><rect x="30" y="502" width="16" height="4" fill="#fff" stroke="#2a2a2a" stroke-opacity=".4" stroke-width="1" paint-order="stroke"/><path d="M84.7 493.3 L63.9 507.6 V513.8 H69.8Z" fill="none" stroke="#3a2a40" stroke-width="3.6" stroke-linejoin="round"/><path d="M84.7 493.3 L63.9 507.6 V513.8 H69.8Z" fill="none" stroke="#35f035" stroke-width="2" stroke-linejoin="miter"/><rect x="30" y="640" width="16" height="4" fill="#fff" stroke="#2a2a2a" stroke-opacity=".4" stroke-width="1" paint-order="stroke"/><path d="M84.7 631.3 L62.9 646 V652.8 H70.3Z" fill="#e8e23a" stroke="#2a2a3a" stroke-width="1.6" paint-order="stroke" stroke-linejoin="round"/><path d="M80 405.7 A10.8 10.8 0 1 1 62 409.7" fill="none" stroke="#2a2a2a" stroke-opacity=".85" stroke-width="4" stroke-linecap="round"/><path d="M80 405.7 A10.8 10.8 0 1 1 62 409.7" fill="none" stroke="#4ae04a" stroke-width="2.5" stroke-linecap="round"/><path d="M57 407.4 L68.1 401.9 L66.9 414.0Z" fill="#4ae04a" stroke="#2a2a2a" stroke-width="1.6" paint-order="stroke" stroke-linejoin="round"/><path d="M80 543.7 A10.8 10.8 0 1 1 62 547.7" fill="none" stroke="#2a2a2a" stroke-opacity=".85" stroke-width="4" stroke-linecap="round"/><path d="M80 543.7 A10.8 10.8 0 1 1 62 547.7" fill="none" stroke="#4ae04a" stroke-width="2.5" stroke-linecap="round"/><path d="M57 545.4000000000001 L68.1 539.9000000000001 L66.9 552.0Z" fill="#4ae04a" stroke="#2a2a2a" stroke-width="1.6" paint-order="stroke" stroke-linejoin="round"/><path d="M80 681.7 A10.8 10.8 0 1 1 62 685.7" fill="none" stroke="#2a2a2a" stroke-opacity=".85" stroke-width="4" stroke-linecap="round"/><path d="M80 681.7 A10.8 10.8 0 1 1 62 685.7" fill="none" stroke="#4ae04a" stroke-width="2.5" stroke-linecap="round"/><path d="M57 683.4000000000001 L68.1 677.9000000000001 L66.9 690.0Z" fill="#4ae04a" stroke="#2a2a2a" stroke-width="1.6" paint-order="stroke" stroke-linejoin="round"/><path d="M71 444 L77.2 450.9 H73.1 V456.9 H79 V453 L86 459 L79 465 V461.1 H73.1 V467 H77.2 L71 474 L64.8 467 H68.9 V461.1 H63 V465 L56 459 L63 453 V456.9 H68.9 V450.9 H64.8Z" fill="#66b8f5" stroke="#252525" stroke-width="1.8" paint-order="stroke" stroke-linejoin="miter"/><path d="M71 582 L77.2 588.9 H73.1 V594.9 H79 V591 L86 597 L79 603 V599.1 H73.1 V605 H77.2 L71 612 L64.8 605 H68.9 V599.1 H63 V603 L56 597 L63 591 V594.9 H68.9 V588.9 H64.8Z" fill="#66b8f5" stroke="#252525" stroke-width="1.8" paint-order="stroke" stroke-linejoin="miter"/></svg>
</body></html>
